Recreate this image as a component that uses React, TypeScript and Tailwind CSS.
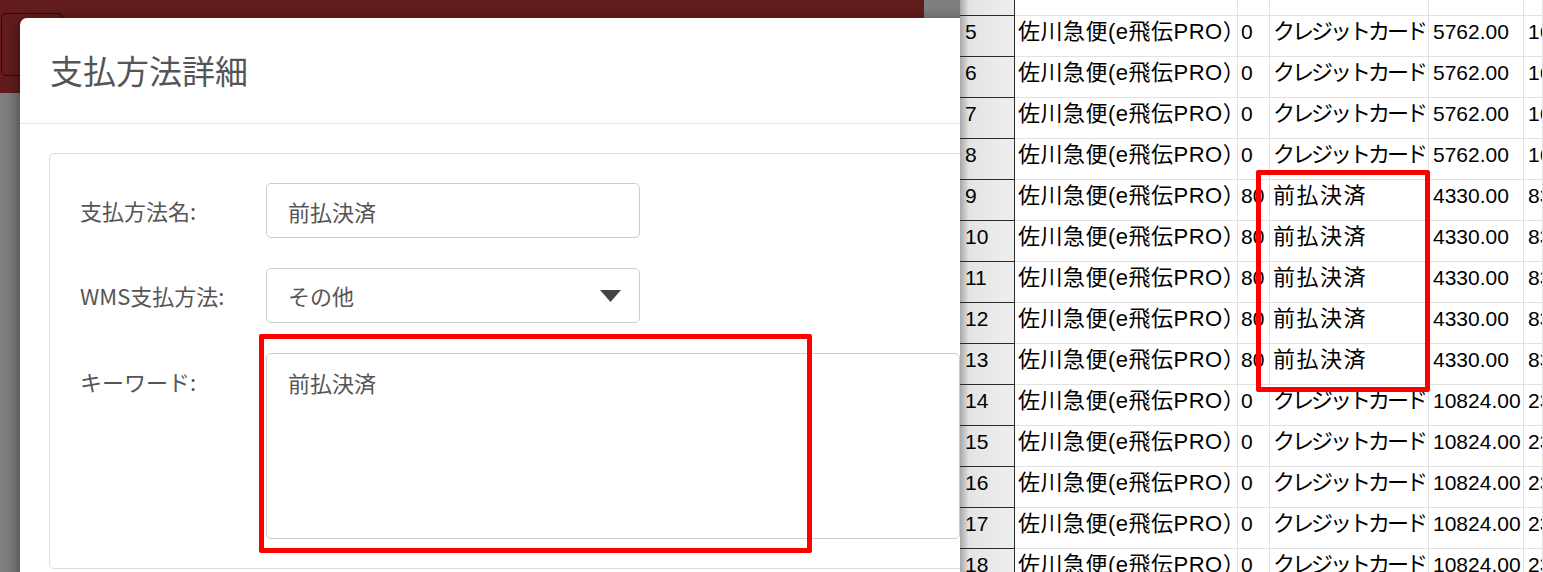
import React from 'react';

const jp = "font-['Noto_Sans_CJK_JP',sans-serif]";
const sheetFont = "font-['Liberation_Sans','Noto_Sans_CJK_JP',sans-serif]";

type Row = { n: number; b: string; c: string; d: string; e: string };

const card = { b: '0', c: 'クレジットカード' };
const prepaid = { b: '80', c: '前払決済' };

const rows: Row[] = [
  { n: 5, ...card, d: '5762.00', e: '1650.00' },
  { n: 6, ...card, d: '5762.00', e: '1650.00' },
  { n: 7, ...card, d: '5762.00', e: '1650.00' },
  { n: 8, ...card, d: '5762.00', e: '1650.00' },
  { n: 9, ...prepaid, d: '4330.00', e: '830.00' },
  { n: 10, ...prepaid, d: '4330.00', e: '830.00' },
  { n: 11, ...prepaid, d: '4330.00', e: '830.00' },
  { n: 12, ...prepaid, d: '4330.00', e: '830.00' },
  { n: 13, ...prepaid, d: '4330.00', e: '830.00' },
  { n: 14, ...card, d: '10824.00', e: '2300.00' },
  { n: 15, ...card, d: '10824.00', e: '2300.00' },
  { n: 16, ...card, d: '10824.00', e: '2300.00' },
  { n: 17, ...card, d: '10824.00', e: '2300.00' },
  { n: 18, ...card, d: '10824.00', e: '2300.00' },
];

const headCell =
  'w-[55px] shrink-0 border-b border-r border-[#2a2a2a] bg-[linear-gradient(to_right,#a8a8a8,#e4e4e4_9px,#efefef)] pl-[5px]';
const cell = 'shrink-0 overflow-hidden whitespace-nowrap border-b border-r border-[#e2e2e2] pl-[3px]';

function SheetRow({ r }: { r: Row }) {
  const katakana = r.c === 'クレジットカード';
  return (
    <div className="flex h-[41px] shrink-0 text-[21px] leading-[26px] text-black">
      <div className={`${headCell} pt-[3px]`}>{r.n}</div>
      <div className={`${cell} w-[223px] pt-[3px] text-[22px] tracking-[0.5px]`}>佐川急便(e飛伝PRO）</div>
      <div className={`${cell} w-[32px] pt-[3px]`}>{r.b}</div>
      <div
        className={`${cell} w-[159px] pt-[3px] text-[22px] ${katakana ? 'tracking-[-3px]' : 'tracking-[1.5px]'}`}
      >
        {r.c}
      </div>
      <div className={`${cell} w-[95px] pl-[4px] pt-[3px]`}>{r.d}</div>
      <div className={`${cell} flex-1 pl-[4px] pt-[3px]`}>{r.e}</div>
    </div>
  );
}

function Spreadsheet() {
  return (
    <div className={`relative h-full flex-1 overflow-hidden bg-white ${sheetFont}`}>
      <div className="flex h-[16px] shrink-0">
        <div className={headCell} />
        <div className={`${cell} w-[223px]`} />
        <div className={`${cell} w-[32px]`} />
        <div className={`${cell} w-[159px]`} />
        <div className={`${cell} w-[95px]`} />
        <div className={`${cell} flex-1`} />
      </div>
      {rows.map(r => (
        <SheetRow key={r.n} r={r} />
      ))}
      {/* annotation */}
      <div className="absolute left-[296px] top-[170px] h-[222px] w-[174px] rounded-[2px] border-[5px] border-[#ff0000]" />
    </div>
  );
}

function Modal() {
  return (
    <div
      className={`absolute left-[20px] top-[18px] w-[1000px] rounded-[7px] bg-white shadow-[0_4px_16px_rgba(0,0,0,0.55)] ${jp}`}
    >
      <div className="flex h-[106px] items-center border-b border-[#e5e5e5] pl-[30px] text-[33px] text-[#555555]">
        支払方法詳細
      </div>
      <div className="p-[29px]">
        <div className="flex flex-col gap-[30px] rounded-[5px] border border-[#dddddd] px-[30px] pb-[29px] pt-[29px] text-[22px] text-[#555555]">
          <div className="flex items-center">
            <label className="w-[186px] shrink-0">支払方法名:</label>
            <input
              readOnly
              value="前払決済"
              className={`h-[55px] w-[374px] rounded-[5px] border border-[#cccccc] bg-white px-[21px] text-[22px] text-[#555555] outline-none ${jp}`}
            />
          </div>
          <div className="flex items-center">
            <label className="w-[186px] shrink-0">WMS支払方法:</label>
            <div className="flex h-[55px] w-[374px] items-center justify-between rounded-[5px] border border-[#cccccc] pl-[21px] pr-[18px]">
              <span>その他</span>
              <svg width="21" height="12" viewBox="0 0 21 12">
                <polygon points="0,0 21,0 10.5,12" fill="#444444" />
              </svg>
            </div>
          </div>
          <div className="flex items-start">
            <label className="w-[186px] shrink-0 pt-[12px]">キーワード:</label>
            <textarea
              readOnly
              value="前払決済"
              className={`h-[186px] w-[760px] resize-none rounded-[5px] border border-[#cccccc] bg-white px-[21px] pt-[12px] text-[22px] leading-[33px] text-[#555555] outline-none ${jp}`}
            />
          </div>
        </div>
      </div>
    </div>
  );
}

export default function App() {
  return (
    <div className="flex h-[572px] w-[1543px] overflow-hidden bg-white">
      <div className="relative h-full w-[960px] shrink-0 overflow-hidden bg-[#7f7f7f]">
        <div className="flex h-[93px] w-[924px] items-start bg-[#631c1c] pt-[13px]">
          <div className="ml-px h-[63px] w-[62px] rounded-[5px] border border-[#2a0c0c]" />
        </div>
        <Modal />
        {/* annotation */}
        <div className="absolute left-[259px] top-[334px] h-[219px] w-[553px] rounded-[2px] border-[5px] border-[#ff0000]" />
      </div>
      <Spreadsheet />
    </div>
  );
}
